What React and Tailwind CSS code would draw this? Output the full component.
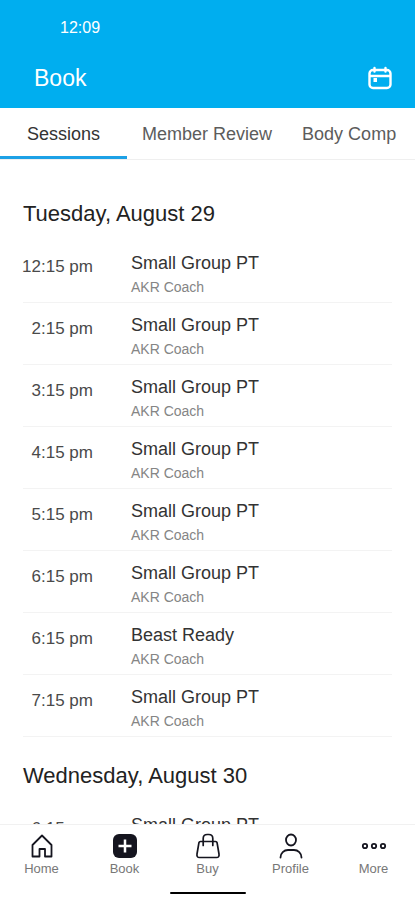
import { useState } from 'react'
import clsx from 'clsx'

const TABS = ['Sessions', 'Member Review', 'Body Comp']

const DAYS = [
  {
    date: 'Tuesday, August 29',
    sessions: [
      { time: '12:15 pm', name: 'Small Group PT', coach: 'AKR Coach' },
      { time: '2:15 pm', name: 'Small Group PT', coach: 'AKR Coach' },
      { time: '3:15 pm', name: 'Small Group PT', coach: 'AKR Coach' },
      { time: '4:15 pm', name: 'Small Group PT', coach: 'AKR Coach' },
      { time: '5:15 pm', name: 'Small Group PT', coach: 'AKR Coach' },
      { time: '6:15 pm', name: 'Small Group PT', coach: 'AKR Coach' },
      { time: '6:15 pm', name: 'Beast Ready', coach: 'AKR Coach' },
      { time: '7:15 pm', name: 'Small Group PT', coach: 'AKR Coach' },
    ],
  },
  {
    date: 'Wednesday, August 30',
    sessions: [{ time: '6:15 am', name: 'Small Group PT', coach: 'AKR Coach' }],
  },
]

function CalendarIcon() {
  return (
    <svg width="26" height="26" viewBox="0 0 26 26" fill="none" stroke="currentColor" strokeWidth="2.4" strokeLinecap="round">
      <rect x="2.5" y="5" width="21" height="18" rx="3.5" />
      <path d="M3 11h20M7.5 3v3.5M18.5 3v3.5" />
      <rect x="6.5" y="13" width="3.5" height="4" fill="currentColor" stroke="none" />
    </svg>
  )
}

function HomeIcon() {
  return (
    <svg width="26" height="26" viewBox="0 0 26 26" fill="none" stroke="currentColor" strokeWidth="1.8" strokeLinejoin="round">
      <path d="M3.5 12 13 2.5l9.5 9.500v11.500h-6.500v-7.500h-5.500v7.500h-7z" />
    </svg>
  )
}

function BookIcon() {
  return (
    <svg width="26" height="26" viewBox="0 0 26 26">
      <rect x="1" y="1" width="24" height="24" rx="6" fill="currentColor" />
      <path d="M13 6.5v13M6.5 13h13" stroke="white" strokeWidth="2.5" />
    </svg>
  )
}

function BuyIcon() {
  return (
    <svg width="26" height="26" viewBox="0 0 26 26" fill="none" stroke="currentColor" strokeWidth="1.7" strokeLinecap="round" strokeLinejoin="round">
      <path d="M5.5 8.5h15q1.300 0 1.600 1.300l1.900 11.200q.500 3.500-2.500 3.500h-17q-3 0-2.500-3.500L3.900 9.800Q4.200 8.500 5.500 8.500z" />
      <path d="M8.200 12.500V5.500q0-4 4-4h1.600q4 0 4 4v7" />
    </svg>
  )
}

function ProfileIcon() {
  return (
    <svg width="26" height="26" viewBox="0 0 26 26" fill="none" stroke="currentColor" strokeWidth="1.8" strokeLinecap="round">
      <ellipse cx="13" cy="7" rx="5" ry="5.5" />
      <path d="M2.5 24.5c0-4.5 3.500-7.500 7.500-7.500h6c4 0 7.500 3 7.500 7.500" />
    </svg>
  )
}

function MoreIcon() {
  return (
    <svg width="26" height="26" viewBox="0 0 26 26" fill="none" stroke="currentColor" strokeWidth="1.8">
      <circle cx="4" cy="13" r="2.2" />
      <circle cx="13" cy="13" r="2.2" />
      <circle cx="22" cy="13" r="2.2" />
    </svg>
  )
}

const NAV = [
  { label: 'Home', icon: HomeIcon },
  { label: 'Book', icon: BookIcon },
  { label: 'Buy', icon: BuyIcon },
  { label: 'Profile', icon: ProfileIcon },
  { label: 'More', icon: MoreIcon },
]

function SessionRow({ session }) {
  return (
    <li className="flex gap-[38px] border-b border-[#f3f3f3] pt-[10px] pb-[5px]">
      <span className="flex w-[70px] shrink-0 justify-end pt-1 text-[17px] leading-6 whitespace-nowrap text-[#4a4a4a]">
        {session.time}
      </span>
      <div>
        <p className="text-[18px] leading-6 text-[#333]">{session.name}</p>
        <p className="pt-[2px] text-[14px] leading-5 text-[#858585]">{session.coach}</p>
      </div>
    </li>
  )
}

export default function App() {
  const [tab, setTab] = useState('Sessions')

  return (
    <div className="flex h-screen flex-col bg-white font-['Liberation_Sans',Arial,sans-serif]">
      <header className="shrink-0 bg-[#00aeef] text-white">
        <div className="px-[60px] pt-4 text-[16px] leading-6">12:09</div>
        <div className="flex items-center justify-between pt-[22px] pr-[22px] pb-[14px] pl-[34px]">
          <h1 className="text-[23px] leading-8">Book</h1>
          <button type="button" aria-label="Calendar"><CalendarIcon /></button>
        </div>
      </header>

      <div role="tablist" className="flex shrink-0 overflow-hidden border-b border-[#efefef]">
        {TABS.map(name => (
          <button key={name} type="button" role="tab" aria-selected={tab === name} onClick={() => setTab(name)}
            className={clsx('shrink-0 border-b-3 pt-[14px] pb-[10px] text-[18px] leading-6 whitespace-nowrap',
              name === 'Sessions' ? 'px-[27px]' : 'px-[15px]',
              tab === name ? 'border-[#1da1e6] text-[#333]' : 'border-transparent text-[#5c5c5c]')}>
            {name}
          </button>
        ))}
      </div>

      <main className="min-h-0 flex-1 overflow-y-auto px-[23px] pt-[15px] [scrollbar-width:none]">
        {DAYS.map(day => (
          <section key={day.date}>
            <h2 className="pt-[23px] pb-[11px] text-[22px] leading-8 text-[#222]">{day.date}</h2>
            <ul>
              {day.sessions.map((s, i) => <SessionRow key={i} session={s} />)}
            </ul>
          </section>
        ))}
      </main>

      <nav className="shrink-0 border-t border-[#f1f1f1] bg-white pt-2 pb-[6px]">
        <div className="grid grid-cols-5">
          {NAV.map(({ label, icon: Icon }) => (
            <button key={label} type="button" className="flex flex-col items-center text-[#15151f]">
              <Icon />
              <span className="text-[13px] leading-5 text-[#777]">{label}</span>
            </button>
          ))}
        </div>
        <div className="mx-auto mt-[13px] h-[2px] w-[76px] rounded-full bg-black" />
      </nav>
    </div>
  )
}
